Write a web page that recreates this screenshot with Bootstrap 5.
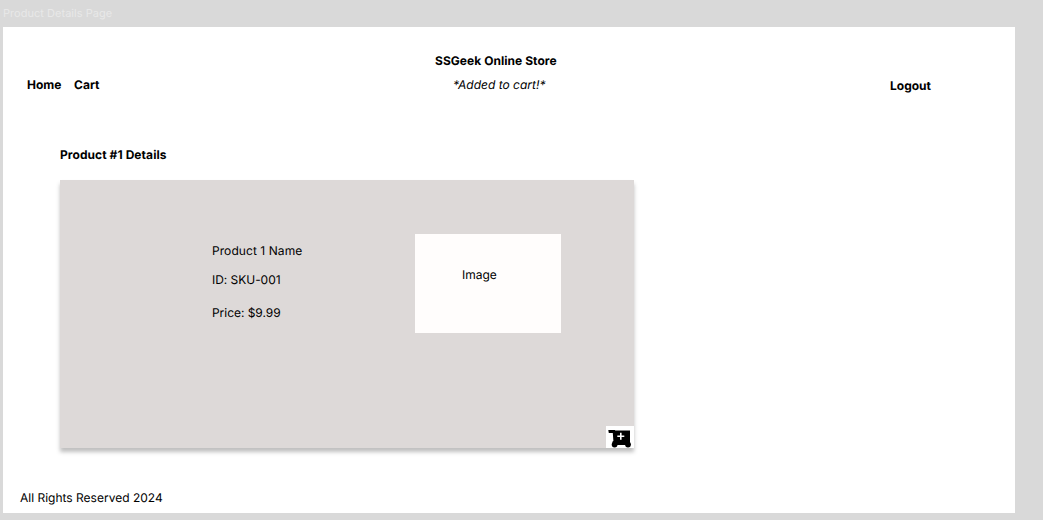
<!DOCTYPE html>
<html lang="en">
<head>
<meta charset="utf-8">
<meta name="viewport" content="width=device-width, initial-scale=1">
<title>Product Details Page</title>
<link href="https://cdn.jsdelivr.net/npm/bootstrap@5.3.0/dist/css/bootstrap.min.css" rel="stylesheet">
<style>
  body { background: #d9d9d9; color: #000; font: 400 12px/16px Inter, sans-serif; height: 520px; overflow: hidden; text-rendering: geometricPrecision; }
  .frame-label { height: 27px; padding: 5px 0 0 3px; font-size: 11px; letter-spacing: .03px; color: #e8e8e8; }
  .page { width: 1012px; height: 486px; margin-left: 3px; padding-top: 26px; }
  .topbar { display: grid; grid-template-columns: 408px 479px 1fr; height: 41px; }
  .topbar a { color: #000; }
  .nav-links { gap: 12.6px; padding-bottom: 1px; }
  .heading { padding-bottom: 1px; }
  .store { margin-left: 24px; letter-spacing: .05px; }
  .note { margin-left: 42px; }
  .page-title { margin: 53px 0 17px 57px; font-size: 12px; line-height: 16px; letter-spacing: .07px; }
  .product-card { width: 574px; height: 268px; margin-left: 57px; background: #ddd9d8; box-shadow: 0 4px 4px rgba(0,0,0,.25); }
  .info { margin-left: 152px; padding-top: 63px; width: 203px; }
  .product-name { letter-spacing: .07px; }
  .sku { margin: 13px 0 17px; }
  .sku, .price { letter-spacing: -.04px; }
  .thumb { width: 146px; height: 99px; margin-top: 54px; padding: 33px 0 0 47px; background: #fffdfc; }
  .cart-btn { width: 28px; height: 22px; background: #fff; }
  .page-foot { margin: 42px 0 0 17px; }
</style>
</head>
<body>
<div class="frame-label">Product Details Page</div>
<div class="page bg-white">
  <header class="topbar">
    <nav class="nav-links d-flex align-items-end fw-bold ps-4">
      <a class="text-decoration-none" href="#">Home</a>
      <a class="text-decoration-none" href="#">Cart</a>
    </nav>
    <div class="heading d-flex flex-column justify-content-between align-items-start">
      <div class="fw-bold store">SSGeek Online Store</div>
      <div class="fst-italic note">*Added to cart!*</div>
    </div>
    <div class="d-flex align-items-end"><a class="text-decoration-none fw-bold" href="#">Logout</a></div>
  </header>
  <h1 class="page-title fw-bold">Product #1 Details</h1>
  <main class="product-card d-flex flex-column justify-content-between">
    <div class="d-flex">
      <div class="info">
        <div class="product-name">Product 1 Name</div>
        <div class="sku">ID: SKU-001</div>
        <div class="price">Price: $9.99</div>
      </div>
      <div class="thumb">Image</div>
    </div>
    <button class="cart-btn border-0 p-0 d-flex align-self-end" aria-label="Add to cart">
      <svg width="28" height="22" viewBox="0 0 28 22">
        <path d="M2.3 4H8.8L9.3 4.6H24V15.7L24.3 19H6.5V15.5L7.4 15L6.8 7H2.8Z" fill="#000"/>
        <circle cx="8.6" cy="18.6" r="2.9"/><circle cx="22" cy="18.6" r="2.9"/>
        <path d="M14.8 6.8V13.8M11.3 10.3H18.3" stroke="#fff" stroke-width="1.6"/>
      </svg>
    </button>
  </main>
  <footer class="page-foot">All Rights Reserved 2024</footer>
</div>
<script src="https://cdn.jsdelivr.net/npm/bootstrap@5.3.0/dist/js/bootstrap.bundle.min.js"></script>
</body>
</html>
